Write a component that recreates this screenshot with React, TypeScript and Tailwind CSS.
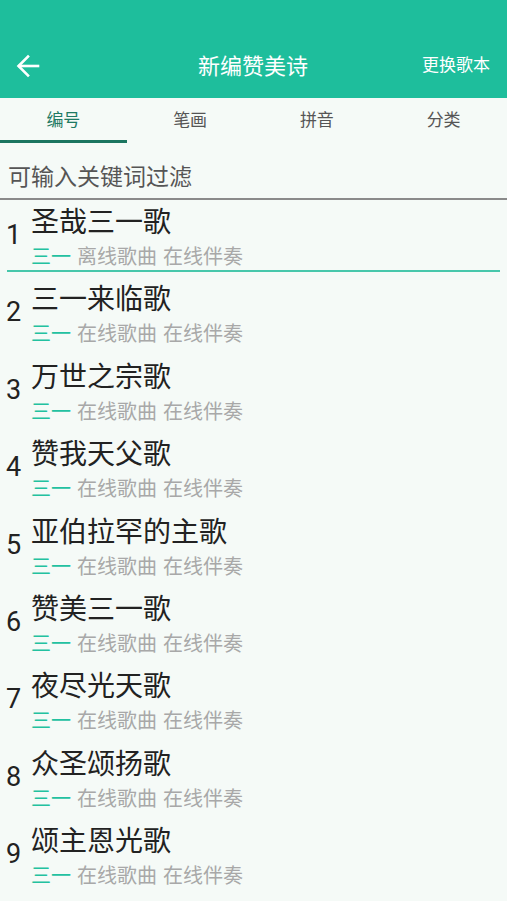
import { useState } from 'react';

const songs = [
  { id: 1, title: '圣哉三一歌', local: '离线歌曲' },
  { id: 2, title: '三一来临歌', local: '在线歌曲' },
  { id: 3, title: '万世之宗歌', local: '在线歌曲' },
  { id: 4, title: '赞我天父歌', local: '在线歌曲' },
  { id: 5, title: '亚伯拉罕的主歌', local: '在线歌曲' },
  { id: 6, title: '赞美三一歌', local: '在线歌曲' },
  { id: 7, title: '夜尽光天歌', local: '在线歌曲' },
  { id: 8, title: '众圣颂扬歌', local: '在线歌曲' },
  { id: 9, title: '颂主恩光歌', local: '在线歌曲' },
];

const tabs = ['编号', '笔画', '拼音', '分类'];

export default function App() {
  const [active, setActive] = useState(0);

  return (
    <div
      className="w-[507px] h-[901px] overflow-hidden bg-[#f5faf7]"
      style={{ fontFamily: "Roboto, 'Noto Sans CJK SC', sans-serif" }}
    >
      {/* Header */}
      <div className="h-[98px] bg-[#1ebe9c] flex items-end pb-[12px]">
        <div className="flex items-center w-full h-[40px]">
          <button className="w-[56px] pl-[16px] text-white">
            <svg width="24" height="24" viewBox="0 0 24 24" fill="none" stroke="white" strokeWidth="2.6" strokeLinecap="square">
              <path d="M22 12H3.5" />
              <path d="M12 2.5L2.5 12L12 21.5" />
            </svg>
          </button>
          <div className="flex-1 text-center text-white text-[22px] pl-[28px]">新编赞美诗</div>
          <div className="text-white text-[17px] pr-[17px]">更换歌本</div>
        </div>
      </div>

      {/* Tabs */}
      <div className="flex h-[45px]">
        {tabs.map((t, i) => (
          <button
            key={t}
            onClick={() => setActive(i)}
            className="flex-1 flex flex-col"
          >
            <span
              className={`flex-1 flex items-center justify-center pt-[4px] text-[17px] ${
                active === i ? 'text-[#1f7a64]' : 'text-[#555555]'
              }`}
            >
              {t}
            </span>
            <span className={`h-[3px] w-full ${active === i ? 'bg-[#1b7560]' : ''}`} />
          </button>
        ))}
      </div>

      {/* Filter */}
      <div className="h-[57px] pt-[20px] border-b-[2px] border-[#8a8a8a] pl-[8px]">
        <input
          placeholder="可输入关键词过滤"
          className="w-full h-[30px] leading-[30px] bg-transparent outline-none text-[23px] placeholder:text-[#555555] text-[#222]"
        />
      </div>

      {/* List */}
      <div>
        {songs.map((s, i) => (
          <div key={s.id} className="h-[77.4px]">
            <div className="flex h-[70px]">
              <div className="w-[31px] pl-[6px] pt-[22px] text-[27px] leading-none text-[#222]">{s.id}</div>
              <div className="pt-[5px]">
                <div className="text-[28px] leading-[36px] text-[#222]">{s.title}</div>
                <div className="mt-[6px] flex text-[20px] leading-[20px] text-[#a8a8a8]">
                  <span className="text-[#23c1a0]">三一</span>
                  <span className="ml-[6px]">{s.local}</span>
                  <span className="ml-[6px]">在线伴奏</span>
                </div>
              </div>
            </div>
            <div className={`mx-[7px] h-[2px] ${i === 0 ? 'bg-[#47c7ab]' : ''}`} />
          </div>
        ))}
      </div>
    </div>
  );
}
